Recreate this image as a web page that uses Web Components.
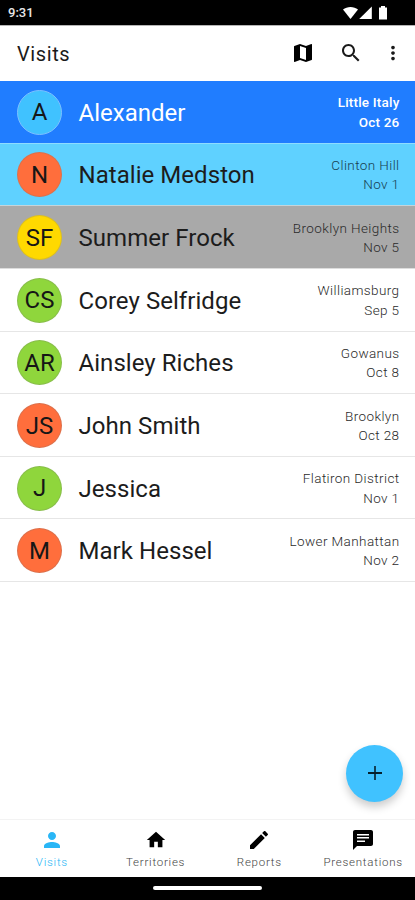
<!DOCTYPE html>
<html lang="en">
<head>
<meta charset="utf-8">
<meta name="viewport" content="width=device-width, initial-scale=1">
<title>Visits</title>
<style>
	html, body { height: 100%; }
	body {
		margin: 0;
		background: #fff;
		color: #111;
		font-family: Roboto, "Liberation Sans", sans-serif;
		overflow: hidden;
	}
</style>
</head>
<body>
<visits-app></visits-app>

<script>
class StatusBar extends HTMLElement {
	constructor() {
		super();
		this.attachShadow({ mode: 'open' });
		this.shadowRoot.innerHTML = `
			<style>
				:host {
					display: flex;
					align-items: center;
					justify-content: space-between;
					box-sizing: border-box;
					height: 24.5px;
					padding: 1px 27px 0 8px;
					background: #000;
					color: #e8e8e8;
					font-size: 13px;
					font-weight: 500;
				}
				svg { display: block; fill: #fff; }
			</style>
			<slot></slot>
			<svg width="46" height="14" viewBox="0 0 46 14">
				<path d="M1 3.6C5 0 12 0 16 3.6L8.5 13z"/>
				<path d="M29.8 .5V13H17.2z"/>
				<path d="M37 1.5h2V0h4v1.5h2V13.5h-8z"/>
			</svg>
		`;
	}
}

class IconGlyph extends HTMLElement {
	static get icons() {
		return {
			map: 'M20.5 3l-.16.03L15 5.1 9 3 3.36 4.9c-.21.07-.36.25-.36.48V20.5c0 .28.22.5.5.5l.16-.03L9 18.9l6 2.1 5.64-1.9c.21-.07.36-.25.36-.48V3.5c0-.28-.22-.5-.5-.5zM15 19l-6-2.11V5l6 2.11V19z',
			search: 'M15.5 14h-.79l-.28-.27C15.41 12.59 16 11.11 16 9.5 16 5.91 13.09 3 9.5 3S3 5.91 3 9.5 5.91 16 9.5 16c1.61 0 3.09-.59 4.23-1.57l.27.28v.79l5 4.99L20.49 19l-4.99-5zm-6 0C7.01 14 5 11.99 5 9.5S7.01 5 9.5 5 14 7.01 14 9.5 11.99 14 9.5 14z',
			more: 'M12 8c1.1 0 2-.9 2-2s-.9-2-2-2-2 .9-2 2 .9 2 2 2zm0 2c-1.1 0-2 .9-2 2s.9 2 2 2 2-.9 2-2-.9-2-2-2zm0 6c-1.1 0-2 .9-2 2s.9 2 2 2 2-.9 2-2-.9-2-2-2z',
			person: 'M12 12c2.21 0 4-1.79 4-4s-1.79-4-4-4-4 1.79-4 4 1.79 4 4 4zm0 2c-2.67 0-8 1.34-8 4v2h16v-2c0-2.66-5.33-4-8-4z',
			home: 'M10 20v-6h4v6h5v-8h3L12 3 2 12h3v8z',
			edit: 'M3 17.25V21h3.75L17.81 9.94l-3.75-3.75L3 17.25zM20.71 7.04c.39-.39.39-1.02 0-1.41l-2.34-2.34c-.39-.39-1.02-.39-1.41 0l-1.83 1.83 3.75 3.75 1.83-1.83z',
			chat: 'M20 2H4c-1.1 0-1.99.9-1.99 2L2 22l4-4h14c1.1 0 2-.9 2-2V4c0-1.1-.9-2-2-2zm-6 12H6v-1.5h8v1.5zm4-3.5H6V9h12v1.5zm0-3H6V6h12v1.5z'
		};
	}

	connectedCallback() {
		if (this.shadowRoot) return;
		const size = this.getAttribute('size') || 24;
		this.attachShadow({ mode: 'open' });
		this.shadowRoot.innerHTML = `
			<style>
				:host { display: block; flex: none; }
				svg { display: block; fill: currentColor; }
			</style>
			<svg width="${size}" height="${size}" viewBox="0 0 24 24">
				<path d="${IconGlyph.icons[this.getAttribute('name')]}"/>
			</svg>
		`;
	}
}

class TopBar extends HTMLElement {
	constructor() {
		super();
		this.attachShadow({ mode: 'open' });
		this.shadowRoot.innerHTML = `
			<style>
				:host {
					display: flex;
					align-items: center;
					box-sizing: border-box;
					height: 56.5px;
					padding: 0 11px 0 17px;
					border-top: 1px solid #b5b5b5;
					color: #1a1a1a;
				}
				h1 {
					flex: 1;
					margin: 0;
					padding-top: 1px;
					font-size: 20px;
					font-weight: 400;
					letter-spacing: .6px;
				}
				nav { display: flex; align-items: center; gap: 24px; padding-bottom: 1px; }
				icon-glyph:first-child { color: #000; }
				icon-glyph:last-child { margin-left: -4.5px; }
			</style>
			<h1><slot></slot></h1>
			<nav>
				<icon-glyph name="map"></icon-glyph>
				<icon-glyph name="search"></icon-glyph>
				<icon-glyph name="more" size="22"></icon-glyph>
			</nav>
		`;
	}
}

class VisitRow extends HTMLElement {
	constructor() {
		super();
		this.attachShadow({ mode: 'open' });
		this.shadowRoot.innerHTML = `
			<style>
				:host {
					display: flex;
					align-items: center;
					box-sizing: border-box;
					height: 62.65px;
					padding: 0 15.5px 0 17px;
					border-bottom: 1.5px solid #e6e6e6;
					color: #1c1c1c;
				}
				:host([tone="blue"]) { background: #207dff; border-color: #8fdcff; color: #fff; }
				:host([tone="sky"]) { background: #5fd1ff; border-color: #c4d4da; }
				:host([tone="grey"]) { background: #a9a9a9; border-color: #ddd; }
				#avatar {
					display: flex;
					align-items: center;
					justify-content: center;
					box-sizing: border-box;
					flex: none;
					width: 45px;
					height: 45px;
					margin-top: 1px;
					border-radius: 50%;
					border: 1px solid rgba(120, 120, 120, .25);
					background: var(--avatar, #ff6e3c);
					color: #161616;
					font-size: 24px;
				}
				:host([tone="blue"]) #avatar { border-color: #7cc0ff; }
				#name {
					flex: 1;
					margin-left: 16.5px;
					padding-top: 2px;
					font-size: 24px;
					letter-spacing: .05px;
					white-space: nowrap;
				}
				#info {
					display: flex;
					flex-direction: column;
					align-items: flex-end;
					padding-top: 2px;
					font-size: 13.5px;
					font-weight: 350;
					line-height: 19.5px;
					letter-spacing: .4px;
					color: #2a2a2a;
					white-space: nowrap;
				}
				:host([tone="blue"]) #name { letter-spacing: 0; }
				:host([tone="blue"]) #info { color: #fff; font-weight: 500; letter-spacing: .2px; }
				:host([tone="sky"]) #info { color: #173f52; }
			</style>
			<div id="avatar"><slot name="initials"></slot></div>
			<div id="name"><slot></slot></div>
			<div id="info">
				<slot name="area"></slot>
				<slot name="date"></slot>
			</div>
		`;
	}
}

class AddButton extends HTMLElement {
	constructor() {
		super();
		this.attachShadow({ mode: 'open' });
		this.shadowRoot.innerHTML = `
			<style>
				:host {
					display: flex;
					align-items: center;
					justify-content: center;
					width: 57px;
					height: 57px;
					border-radius: 50%;
					background: #40c2ff;
					color: #06202c;
					box-shadow: 0 5px 9px rgba(0, 0, 0, .2);
				}
				svg { display: block; }
			</style>
			<svg width="16" height="16" viewBox="0 0 16 16" stroke="currentColor">
				<path d="M8 1v14" stroke-width="1.6"/>
				<path d="M1 8h14" stroke-width="2"/>
			</svg>
		`;
	}
}

class TabItem extends HTMLElement {
	connectedCallback() {
		if (this.shadowRoot) return;
		this.attachShadow({ mode: 'open' });
		this.shadowRoot.innerHTML = `
			<style>
				:host {
					display: flex;
					flex-direction: column;
					align-items: center;
					flex: 1 1 0;
					min-width: 0;
					padding-top: 8px;
					gap: 2px;
					color: #000;
				}
				#icon {
					display: flex;
					align-items: center;
					justify-content: center;
					height: 24px;
				}
				#label {
					color: #444;
					font-size: 11.5px;
					font-weight: 350;
					line-height: 16px;
					letter-spacing: .75px;
					white-space: nowrap;
				}
				:host([active]), :host([active]) #label { color: #29b6f6; }
			</style>
			<div id="icon">
				<icon-glyph name="${this.getAttribute('icon')}" size="${this.getAttribute('size') || 24}"></icon-glyph>
			</div>
			<div id="label"><slot></slot></div>
		`;
	}
}

class TabBar extends HTMLElement {
	constructor() {
		super();
		this.attachShadow({ mode: 'open' });
		this.shadowRoot.innerHTML = `
			<style>
				:host {
					display: flex;
					box-sizing: border-box;
					height: 57.5px;
					border-top: 1px solid #f3f3f3;
					background: #fff;
				}
			</style>
			<slot></slot>
		`;
	}
}

class GestureBar extends HTMLElement {
	constructor() {
		super();
		this.attachShadow({ mode: 'open' });
		this.shadowRoot.innerHTML = `
			<style>
				:host {
					display: flex;
					align-items: center;
					justify-content: center;
					height: 23.5px;
					background: #000;
				}
				div { width: 109px; height: 4px; border-radius: 2px; background: #fff; }
			</style>
			<div></div>
		`;
	}
}

const visits = [
	{ name: 'Alexander', initials: 'A', area: 'Little Italy', date: 'Oct 26', avatar: '#40c2ff', tone: 'blue' },
	{ name: 'Natalie Medston', initials: 'N', area: 'Clinton Hill', date: 'Nov 1', avatar: '#ff6e3c', tone: 'sky' },
	{ name: 'Summer Frock', initials: 'SF', area: 'Brooklyn Heights', date: 'Nov 5', avatar: '#ffd900', tone: 'grey' },
	{ name: 'Corey Selfridge', initials: 'CS', area: 'Williamsburg', date: 'Sep 5', avatar: '#8fd63c' },
	{ name: 'Ainsley Riches', initials: 'AR', area: 'Gowanus', date: 'Oct 8', avatar: '#8fd63c' },
	{ name: 'John Smith', initials: 'JS', area: 'Brooklyn', date: 'Oct 28', avatar: '#ff6e3c' },
	{ name: 'Jessica', initials: 'J', area: 'Flatiron District', date: 'Nov 1', avatar: '#8fd63c' },
	{ name: 'Mark Hessel', initials: 'M', area: 'Lower Manhattan', date: 'Nov 2', avatar: '#ff6e3c' }
];

class VisitsApp extends HTMLElement {
	constructor() {
		super();
		this.attachShadow({ mode: 'open' });
		this.shadowRoot.innerHTML = `
			<style>
				:host {
					display: flex;
					flex-direction: column;
					position: relative;
					height: 100vh;
				}
				main { flex: 1; min-height: 0; }
				/* floats over the list, above the tabs */
				add-button { position: absolute; right: 12px; bottom: 98.5px; }
			</style>
			<status-bar>9:31</status-bar>
			<top-bar>Visits</top-bar>
			<main>
				${visits.map((v) => `
					<visit-row ${v.tone ? `tone="${v.tone}"` : ''} style="--avatar: ${v.avatar}">
						<span slot="initials">${v.initials}</span>${v.name}
						<span slot="area">${v.area}</span>
						<span slot="date">${v.date}</span>
					</visit-row>
				`).join('')}
			</main>
			<tab-bar>
				<tab-item icon="person" active>Visits</tab-item>
				<tab-item icon="home" size="22">Territories</tab-item>
				<tab-item icon="edit">Reports</tab-item>
				<tab-item icon="chat">Presentations</tab-item>
			</tab-bar>
			<gesture-bar></gesture-bar>
			<add-button></add-button>
		`;
	}
}

customElements.define('status-bar', StatusBar);
customElements.define('icon-glyph', IconGlyph);
customElements.define('top-bar', TopBar);
customElements.define('visit-row', VisitRow);
customElements.define('add-button', AddButton);
customElements.define('tab-item', TabItem);
customElements.define('tab-bar', TabBar);
customElements.define('gesture-bar', GestureBar);
customElements.define('visits-app', VisitsApp);
</script>
</body>
</html>
